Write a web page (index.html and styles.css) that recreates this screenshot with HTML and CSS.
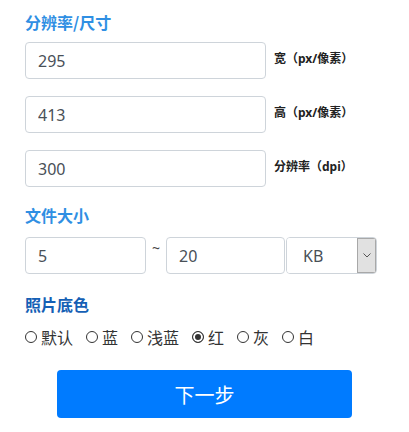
FILE: index.html
```html
<!DOCTYPE html>
<html lang="zh-CN">
<head>
  <meta charset="UTF-8">
  <meta name="viewport" content="width=device-width, initial-scale=1.0">
  <title>证件照设置</title>
  <link rel="stylesheet" href="styles.css">
</head>
<body>
  <div class="page">
    <div class="section">
      <h2 class="title">分辨率/尺寸</h2>
      <div class="field-row">
        <input type="text" class="control size" value="295">
        <span class="unit">宽（px/像素）</span>
      </div>
      <div class="field-row">
        <input type="text" class="control size" value="413">
        <span class="unit">高（px/像素）</span>
      </div>
      <div class="field-row">
        <input type="text" class="control size" value="300">
        <span class="unit">分辨率（dpi）</span>
      </div>
    </div>

    <div class="section file-size">
      <h2 class="title">文件大小</h2>
      <div class="field-row">
        <input type="text" class="control min" value="5">
        <span class="tilde">~</span>
        <input type="text" class="control max" value="20">
        <div class="select-box">
          <select class="unit-select">
            <option>KB</option>
            <option>MB</option>
          </select>
          <span class="arrow">
            <svg width="8" height="5" viewBox="0 0 8 5"><path d="M0.5 0.5 L4 4 L7.5 0.5" fill="none" stroke="#555" stroke-width="1"/></svg>
          </span>
        </div>
      </div>
    </div>

    <div class="section bg-color">
      <h2 class="title dark">照片底色</h2>
      <div class="radio-row">
        <label class="radio"><input type="radio" name="bg" value="default">默认</label>
        <label class="radio"><input type="radio" name="bg" value="blue">蓝</label>
        <label class="radio"><input type="radio" name="bg" value="lightblue">浅蓝</label>
        <label class="radio"><input type="radio" name="bg" value="red" checked>红</label>
        <label class="radio"><input type="radio" name="bg" value="gray">灰</label>
        <label class="radio"><input type="radio" name="bg" value="white">白</label>
      </div>
    </div>

    <button type="button" class="next-btn">下一步</button>
  </div>
</body>
</html>
```

FILE: styles.css
```css
body {
  margin: 0;
  padding: 0;
  background-color: #fff;
  color: #333;
  font-family: "Noto Sans", "Noto Sans CJK SC", sans-serif;
}
.page {
  padding: 12px 25px 0;
}
.title {
  margin: 0 0 10px;
  font-size: 16px;
  line-height: 20px;
  font-weight: bold;
  color: #2f8fe3;
  font-family: "Noto Sans CJK SC", sans-serif;
}
.title.dark {
  color: #1560b5;
}
.field-row {
  display: flex;
  align-items: flex-start;
  margin-bottom: 17px;
}
.section .field-row:last-child {
  margin-bottom: 0;
}
.control {
  box-sizing: border-box;
  height: 37px;
  padding: 0 12px;
  border: 1px solid #ced4da;
  border-radius: 4px;
  font-family: "Noto Sans", sans-serif;
  font-size: 16px;
  color: #495057;
  background: #fff;
  outline: none;
}
.control.size {
  width: 241px;
}
.unit {
  margin-left: 8px;
  padding-top: 9px;
  font-size: 12px;
  line-height: 16px;
  font-weight: bold;
  color: #222;
  font-family: "Noto Sans", "Noto Sans CJK SC", sans-serif;
}
.file-size {
  margin-top: 18px;
}
.file-size .title {
  margin-bottom: 12px;
}
.control.min {
  width: 121px;
}
.tilde {
  width: 20px;
  padding-top: 1px;
  text-align: center;
  font-size: 14px;
  line-height: 20px;
  color: #444;
}
.control.max {
  width: 119px;
}
.select-box {
  box-sizing: border-box;
  display: flex;
  width: 91px;
  height: 37px;
  margin-left: 1px;
  border: 1px solid #ced4da;
  border-radius: 4px;
  overflow: hidden;
}
.unit-select {
  flex: 1;
  min-width: 0;
  border: none;
  padding: 0 0 0 16px;
  -webkit-appearance: none;
  appearance: none;
  background: #fff;
  font-family: "Noto Sans", sans-serif;
  font-size: 16px;
  color: #495057;
  outline: none;
}
.arrow {
  display: flex;
  align-items: center;
  justify-content: center;
  width: 17px;
  background-color: #e1e1e1;
  border: 1px solid #a8a8a8;
}
.bg-color {
  margin-top: 20px;
}
.bg-color .title {
  margin-bottom: 12px;
}
.radio-row {
  display: flex;
  align-items: center;
  gap: 13px;
  font-size: 16px;
  line-height: 22px;
  color: #333;
  font-family: "Noto Sans CJK SC", sans-serif;
}
.radio {
  display: flex;
  align-items: center;
  gap: 4px;
  cursor: pointer;
}
.radio input {
  -webkit-appearance: none;
  appearance: none;
  box-sizing: border-box;
  width: 12px;
  height: 12px;
  margin: 0;
  border: 1px solid #333;
  border-radius: 50%;
  background: #fff;
}
.radio input:checked {
  background: #333;
  box-shadow: inset 0 0 0 2px #fff;
}
.next-btn {
  display: block;
  width: 295px;
  height: 48px;
  margin: 22px auto 0;
  border: none;
  border-radius: 4px;
  background-color: #007bff;
  color: white;
  font-size: 20px;
  font-family: "Noto Sans CJK SC", sans-serif;
  cursor: pointer;
}
```
